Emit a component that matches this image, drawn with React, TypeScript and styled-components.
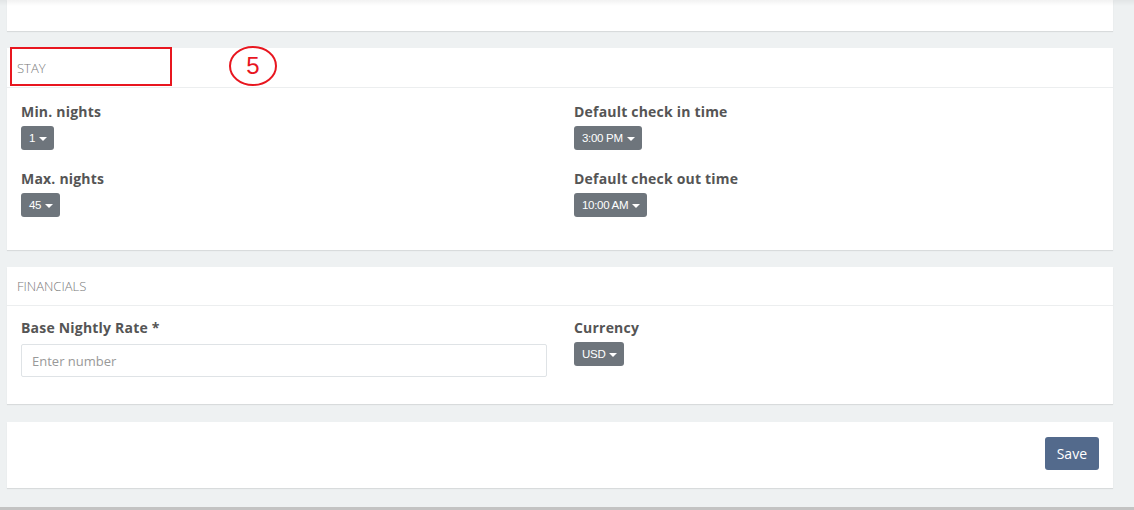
import React from "react";
import styled, { createGlobalStyle } from "styled-components";

const GlobalStyle = createGlobalStyle`
  html, body {
    margin: 0;
    padding: 0;
    background: #eef1f2;
    font-family: "Open Sans", "Liberation Sans", sans-serif;
  }
`;

const Page = styled.div`
  position: relative;
  width: 1134px;
  height: 510px;
  overflow: hidden;
  background: #eef1f2;
  display: flex;
  flex-direction: column;
  padding: 0 21px 0 7px;
  box-sizing: border-box;

  &::before {
    content: "";
    position: absolute;
    left: 0;
    right: 0;
    top: 0;
    height: 6px;
    background: linear-gradient(rgba(0, 0, 0, 0.05), rgba(0, 0, 0, 0));
    z-index: 2;
  }
`;

const Card = styled.section<{ $gap?: number; $height?: number }>`
  position: relative;
  background: #fff;
  box-shadow: 0 1px 1px rgba(0, 0, 0, 0.09);
  margin-top: ${(p) => p.$gap ?? 0}px;
  ${(p) => (p.$height ? `height: ${p.$height}px;` : "")}
  flex-shrink: 0;
`;

const CardHeader = styled.div<{ $height: number }>`
  height: ${(p) => p.$height}px;
  border-bottom: 1px solid #eceeef;
  display: flex;
  align-items: center;
  padding-left: 10px;
  font-family: "Open Sans", sans-serif;
  font-weight: 300;
  font-size: 13px;
  color: #7a7a7a;
  text-transform: uppercase;
`;

const CardBody = styled.div<{ $top: number; $bottom: number }>`
  display: grid;
  grid-template-columns: 526px 525px;
  column-gap: 27px;
  padding: ${(p) => p.$top}px 14px ${(p) => p.$bottom}px 14px;
`;

const Column = styled.div`
  display: flex;
  flex-direction: column;
`;

const Group = styled.div<{ $last?: boolean }>`
  display: flex;
  flex-direction: column;
  align-items: flex-start;
  margin-bottom: ${(p) => (p.$last ? 0 : 19)}px;
`;

const Label = styled.label`
  font-family: "Open Sans", sans-serif;
  font-weight: 700;
  font-size: 14px;
  line-height: 20px;
  letter-spacing: 0.2px;
  color: #555;
  margin-bottom: 4px;
`;

const Dropdown = styled.button`
  display: inline-flex;
  align-items: center;
  gap: 4px;
  height: 24px;
  padding: 0 7px 0 8px;
  border: none;
  border-radius: 3px;
  background: #6e757c;
  color: #fff;
  font-family: "Liberation Sans", Arial, sans-serif;
  font-size: 11.5px;
  letter-spacing: -0.3px;
  cursor: pointer;
`;

const Caret = styled.span`
  width: 0;
  height: 0;
  border-left: 4px solid transparent;
  border-right: 4px solid transparent;
  border-top: 4px solid #fff;
  margin-top: 1px;
`;

const Input = styled.input`
  width: 100%;
  height: 33px;
  box-sizing: border-box;
  border: 1px solid #dfe3e6;
  border-radius: 2px;
  padding: 0 10px;
  font-family: "Open Sans", sans-serif;
  font-size: 13px;
  color: #555;
  outline: none;
  margin-top: 2px;

  &::placeholder {
    color: #999;
  }
`;

const Footer = styled.div`
  display: flex;
  justify-content: flex-end;
  padding: 15px 14px 18px;
`;

const SaveButton = styled.button`
  height: 33px;
  padding: 0 12px;
  border: none;
  border-radius: 3px;
  background: #536a8c;
  color: #fff;
  font-family: "Open Sans", sans-serif;
  font-size: 14px;
  cursor: pointer;
`;

const MarkBox = styled.div`
  position: absolute;
  left: 3px;
  top: -1px;
  width: 162px;
  height: 39px;
  box-sizing: border-box;
  border: 2px solid #e8161f;
  pointer-events: none;
`;

const MarkCircle = styled.svg`
  position: absolute;
  left: 221px;
  top: -3px;
  pointer-events: none;
`;

const BottomLine = styled.div`
  position: absolute;
  left: 0;
  right: 0;
  bottom: 0;
  height: 3px;
  background: #c3c3c3;
`;

const Select = ({ value }: { value: string }) => (
  <Dropdown>
    {value}
    <Caret />
  </Dropdown>
);

export default function App() {
  return (
    <>
      <GlobalStyle />
      <Page>
        <Card $height={31} />

        <Card $gap={17}>
          <CardHeader $height={39}>Stay</CardHeader>
          <MarkBox />
          <MarkCircle width="50" height="42" viewBox="0 0 50 42">
            <ellipse cx="25" cy="21" rx="23" ry="19" fill="none" stroke="#e8161f" strokeWidth="2" />
            <text
              x="25"
              y="29"
              textAnchor="middle"
              fontFamily="Liberation Sans, Arial, sans-serif"
              fontSize="24"
              fill="#e8161f"
            >
              5
            </text>
          </MarkCircle>
          <CardBody $top={14} $bottom={33}>
            <Column>
              <Group>
                <Label>Min. nights</Label>
                <Select value="1" />
              </Group>
              <Group $last>
                <Label>Max. nights</Label>
                <Select value="45" />
              </Group>
            </Column>
            <Column>
              <Group>
                <Label>Default check in time</Label>
                <Select value="3:00 PM" />
              </Group>
              <Group $last>
                <Label>Default check out time</Label>
                <Select value="10:00 AM" />
              </Group>
            </Column>
          </CardBody>
        </Card>

        <Card $gap={17}>
          <CardHeader $height={38}>Financials</CardHeader>
          <CardBody $top={12} $bottom={27}>
            <Column>
              <Group $last>
                <Label>Base Nightly Rate *</Label>
                <Input placeholder="Enter number" />
              </Group>
            </Column>
            <Column>
              <Group $last>
                <Label>Currency</Label>
                <Select value="USD" />
              </Group>
            </Column>
          </CardBody>
        </Card>

        <Card $gap={18}>
          <Footer>
            <SaveButton>Save</SaveButton>
          </Footer>
        </Card>

        <BottomLine />
      </Page>
    </>
  );
}
